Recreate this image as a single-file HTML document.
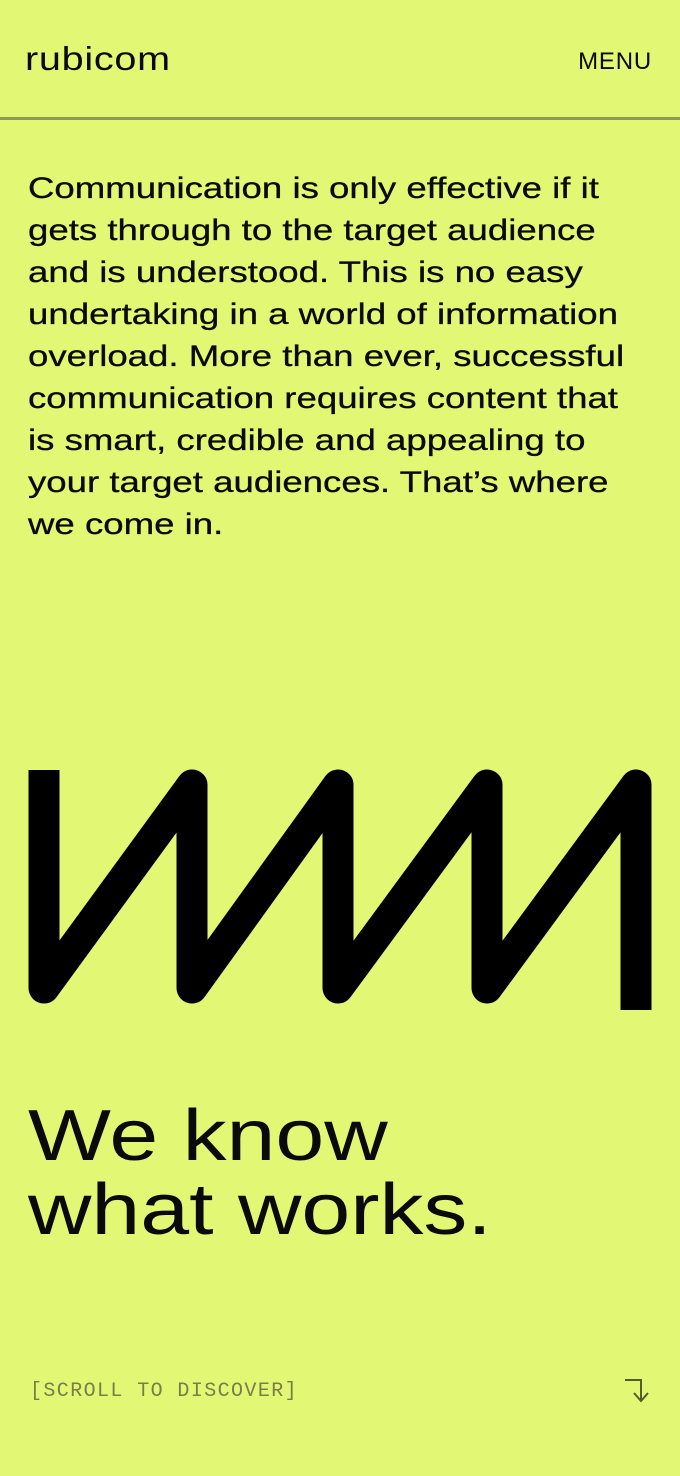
<!DOCTYPE html>
<html><head><meta charset="utf-8"><style>
html,body{margin:0;padding:0;}
body{width:680px;height:1476px;background:#e2f774;position:relative;overflow:hidden;font-family:"Liberation Sans",sans-serif;color:#0a0a0a;}
.logo{position:absolute;left:25px;top:40px;font-size:33px;letter-spacing:0.6px;transform:scaleX(1.2);transform-origin:left;}
.menu{position:absolute;right:28px;top:48px;font-size:24px;letter-spacing:0.8px;}
.rule{position:absolute;left:0;top:117px;width:680px;height:3px;background:#8f9a52;}
.para{position:absolute;left:28px;top:168px;font-size:30px;line-height:42px;white-space:nowrap;transform:scaleX(1.22);transform-origin:left;-webkit-text-stroke:0.3px #0a0a0a;}
.big{position:absolute;left:28px;top:1099px;font-size:72px;line-height:74px;white-space:nowrap;transform:scaleX(1.22);transform-origin:left;}
.scroll{position:absolute;left:30px;top:1380px;font-family:"Liberation Mono",monospace;font-size:20px;color:#777f45;letter-spacing:1.4px;}
</style></head><body>
<div class="logo">rubicom</div>
<div class="menu">MENU</div>
<div class="rule"></div>
<div class="para">Communication is only effective if it<br>gets through to the target audience<br>and is understood. This is no easy<br>undertaking in a world of information<br>overload. More than ever, successful<br>communication requires content that<br>is smart, credible and appealing to<br>your target audiences. That’s where<br>we come in.</div>
<svg style="position:absolute;left:0;top:0" width="680" height="1476">
<polyline fill="none" stroke="#000" stroke-width="31" stroke-linejoin="round" points="44,770 44,988 192,785 192,988 338,785 338,988 487,785 487,988 636,785 636,1010"/>
<path d="M625 1380 H641 V1400 M634 1393 L641 1401 L648 1393" fill="none" stroke="#555c30" stroke-width="2"/>
</svg>
<div class="big">We know<br>what works.</div>
<div class="scroll">[SCROLL TO DISCOVER]</div>
</body></html>
